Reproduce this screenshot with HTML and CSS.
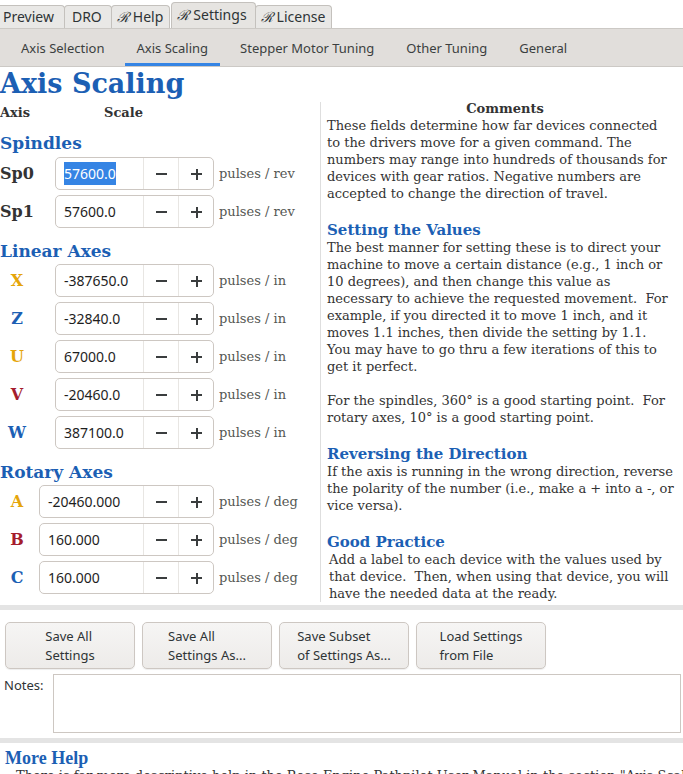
FILE: index.html
```html
<!DOCTYPE html>
<html lang="en">
<head>
    <meta charset="UTF-8">
    <meta name="viewport" content="width=device-width, initial-scale=1.0">
    <title>Rose Engine Settings</title>
    <link rel="stylesheet" href="styles.css">
</head>
<body>
    <nav class="notebook">
        <span class="tab first">Preview</span>
        <span class="tab">DRO</span>
        <span class="tab rosed"><i class="rose">ℛ</i>Help</span>
        <span class="tab rosed active"><i class="rose">ℛ</i>Settings</span>
        <span class="tab rosed"><i class="rose">ℛ</i>License</span>
    </nav>

    <nav class="subtabs">
        <span>Axis Selection</span>
        <span class="active">Axis Scaling</span>
        <span>Stepper Motor Tuning</span>
        <span>Other Tuning</span>
        <span>General</span>
    </nav>

    <main class="page">
        <section class="scales">
            <h1>Axis Scaling</h1>
            <div class="col-head"><span>Axis</span><span>Scale</span></div>

            <h2>Spindles</h2>
            <div class="row spindle">
                <label>Sp0</label>
                <div class="spin">
                    <div class="entry"><span class="sel">57600.0</span></div>
                    <span class="btn minus"></span><span class="btn plus"></span>
                </div>
                <span class="unit">pulses / rev</span>
            </div>
            <div class="row spindle">
                <label>Sp1</label>
                <div class="spin">
                    <div class="entry">57600.0</div>
                    <span class="btn minus"></span><span class="btn plus"></span>
                </div>
                <span class="unit">pulses / rev</span>
            </div>

            <h2>Linear Axes</h2>
            <div class="row linear">
                <label class="gold">X</label>
                <div class="spin">
                    <div class="entry">-387650.0</div>
                    <span class="btn minus"></span><span class="btn plus"></span>
                </div>
                <span class="unit">pulses / in</span>
            </div>
            <div class="row linear">
                <label class="blue">Z</label>
                <div class="spin">
                    <div class="entry">-32840.0</div>
                    <span class="btn minus"></span><span class="btn plus"></span>
                </div>
                <span class="unit">pulses / in</span>
            </div>
            <div class="row linear">
                <label class="gold">U</label>
                <div class="spin">
                    <div class="entry">67000.0</div>
                    <span class="btn minus"></span><span class="btn plus"></span>
                </div>
                <span class="unit">pulses / in</span>
            </div>
            <div class="row linear">
                <label class="red">V</label>
                <div class="spin">
                    <div class="entry">-20460.0</div>
                    <span class="btn minus"></span><span class="btn plus"></span>
                </div>
                <span class="unit">pulses / in</span>
            </div>
            <div class="row linear">
                <label class="blue">W</label>
                <div class="spin">
                    <div class="entry">387100.0</div>
                    <span class="btn minus"></span><span class="btn plus"></span>
                </div>
                <span class="unit">pulses / in</span>
            </div>

            <h2>Rotary Axes</h2>
            <div class="row rotary">
                <label class="gold">A</label>
                <div class="spin">
                    <div class="entry">-20460.000</div>
                    <span class="btn minus"></span><span class="btn plus"></span>
                </div>
                <span class="unit">pulses / deg</span>
            </div>
            <div class="row rotary">
                <label class="red">B</label>
                <div class="spin">
                    <div class="entry">160.000</div>
                    <span class="btn minus"></span><span class="btn plus"></span>
                </div>
                <span class="unit">pulses / deg</span>
            </div>
            <div class="row rotary">
                <label class="blue">C</label>
                <div class="spin">
                    <div class="entry">160.000</div>
                    <span class="btn minus"></span><span class="btn plus"></span>
                </div>
                <span class="unit">pulses / deg</span>
            </div>
        </section>

        <section class="comments">
            <h3>Comments</h3>
            <p>These fields determine how far devices connected
to the drivers move for a given command. The
numbers may range into hundreds of thousands for
devices with gear ratios. Negative numbers are
accepted to change the direction of travel.</p>
            <h4>Setting the Values</h4>
            <p>The best manner for setting these is to direct your
machine to move a certain distance (e.g., 1 inch or
10 degrees), and then change this value as
necessary to achieve the requested movement.  For
example, if you directed it to move 1 inch, and it
moves 1.1 inches, then divide the setting by 1.1.
You may have to go thru a few iterations of this to
get it perfect.

For the spindles, 360° is a good starting point.  For
rotary axes, 10° is a good starting point.</p>
            <h4>Reversing the Direction</h4>
            <p>If the axis is running in the wrong direction, reverse
the polarity of the number (i.e., make a + into a -, or
vice versa).</p>
            <h4>Good Practice</h4>
            <p class="nudge">Add a label to each device with the values used by
that device.  Then, when using that device, you will
have the needed data at the ready.</p>
        </section>
    </main>

    <div class="actions">
        <button><span>Save All<br>Settings</span></button>
        <button><span>Save All<br>Settings As...</span></button>
        <button><span>Save Subset<br>of Settings As...</span></button>
        <button><span>Load Settings<br>from File</span></button>
    </div>

    <div class="notes">
        <label for="notes">Notes:</label>
        <textarea id="notes"></textarea>
    </div>

    <section class="more-help">
        <h2>More Help</h2>
        <p>There is far more descriptive help in the Rose Engine Pathpilot User Manual in the section "Axis Scaling".</p>
    </section>
</body>
</html>
```

FILE: styles.css
```css
body {
    margin: 0;
    width: 683px;
    height: 774px;
    overflow: hidden;
    font-family: "Noto Sans", sans-serif;
    font-size: 13px;
    color: #2e3436;
    background: #fff;
}

/* top notebook tabs */
.notebook {
    display: flex;
    align-items: flex-end;
    height: 28px;
}

.tab {
    height: 22px;
    line-height: 22px;
    padding: 0 9px 0 7px;
    background: #e9e8e6;
    border: 1px solid #c4c1bd;
    border-bottom: none;
    border-radius: 4px 4px 0 0;
    margin-right: -1px;
    font-size: 14px;
    color: #2e3436;
}

.tab.first {
    padding-left: 3px;
    padding-right: 10px;
    border-left: none;
    border-radius: 0 4px 0 0;
}

.tab.rosed {
    padding: 0 6px 0 5px;
}

.tab.active {
    height: 25px;
    line-height: 24px;
    margin-left: 2px;
    padding-right: 8px;
    background: #e6e4e1;
}

.rose {
    font-family: "DejaVu Serif", serif;
    font-size: 14px;
    margin-right: 4px;
}

/* second row of tabs */
.subtabs {
    display: flex;
    gap: 8px;
    height: 37px;
    padding-left: 9px;
    background: #e1dedb;
    border-top: 1px solid #ccc9c5;
    border-bottom: 1px solid #ccc9c5;
}

.subtabs span {
    padding: 2px 12px 0;
    line-height: 35px;
    color: #3b3f40;
}

.subtabs span.active {
    box-shadow: inset 0 -3px 0 #3584e4;
}

/* main page: scale column + comments */
.page {
    display: flex;
    height: 538px;
    border-bottom: 5px solid #e4e4e4;
}

.scales {
    width: 320px;
    font-family: "DejaVu Serif", serif;
}

h1 {
    margin: 0;
    font-size: 27px;
    line-height: 33px;
    color: #1c5fb4;
}

.col-head {
    display: flex;
    margin-top: 4px;
    font-weight: bold;
    font-size: 13px;
    line-height: 17px;
    color: #333;
}

.col-head span:first-child {
    width: 104px;
}

.scales h2 {
    margin: 12px 0 4px;
    font-size: 17px;
    line-height: 20px;
    color: #1c5fb4;
}

.scales h2 ~ h2 {
    margin-top: 13px;
    margin-bottom: 3px;
}

.row {
    display: flex;
    align-items: center;
    margin-bottom: 5px;
}

.row label {
    width: 34px;
    text-align: center;
    font-weight: bold;
    font-size: 16px;
    color: #333;
}

.row.spindle label {
    text-align: left;
}

.gold { color: #e5a50a !important; }
.blue { color: #1c5fb4 !important; }
.red { color: #a51d2d !important; }

.spin {
    display: flex;
    height: 31px;
    width: 157px;
    margin-left: 21px;
    border: 1px solid #cdc7c2;
    border-radius: 5px;
    background: #fff;
    font-family: "Noto Sans", sans-serif;
    font-size: 14px;
    color: #1e1e1e;
}

.rotary .spin {
    width: 173px;
    margin-left: 5px;
}

.entry {
    flex: 1;
    padding-left: 8px;
    line-height: 31px;
}

.sel {
    background: #3584e4;
    color: #fff;
    padding: 2px 0;
}

.btn {
    position: relative;
    width: 34px;
    border-left: 1px solid #e8e6e3;
}

.btn::before,
.btn::after {
    content: "";
    position: absolute;
    left: 12px;
    top: 15px;
    width: 11px;
    height: 2px;
    background: #3a3d3e;
}

.btn.minus::after {
    display: none;
}

.btn.plus::after {
    left: 16.5px;
    top: 10.5px;
    width: 2px;
    height: 11px;
}

.unit {
    margin-left: 5px;
    font-size: 13px;
    color: #555753;
}

.comments {
    flex: 1;
    margin-top: 35px;
    height: 500px;
    padding-left: 6px;
    border-left: 1px solid #dedede;
    font-family: "DejaVu Serif", serif;
    font-size: 13px;
    line-height: 17px;
    color: #333;
}

.comments h3 {
    margin: -2px 0 0;
    text-align: center;
    font-size: 13px;
    line-height: 17px;
}

.comments p {
    margin: 0;
    white-space: pre;
}

.comments p.nudge {
    padding-left: 2px;
}

.comments h4 {
    margin: 20px 0 0;
    font-size: 15px;
    line-height: 17px;
    color: #1c5fb4;
}

/* settings buttons */
.actions {
    display: flex;
    gap: 7px;
    padding: 12px 0 0 5px;
}

.actions button {
    width: 130px;
    height: 47px;
    padding: 0;
    text-align: center;
    font-family: "Noto Sans", sans-serif;
    font-size: 13px;
    line-height: 19px;
    color: #2e3436;
    background: linear-gradient(#f6f5f4, #edebe9);
    border: 1px solid #cdc7c2;
    border-radius: 5px;
    box-shadow: 0 1px 1px rgba(0, 0, 0, 0.07);
}

.actions button span {
    display: inline-block;
    text-align: left;
}

.notes {
    display: flex;
    height: 64px;
    padding: 5px 2px 0 4px;
    border-bottom: 5px solid #e4e4e4;
}

.notes label {
    width: 49px;
    line-height: 20px;
    padding-top: 1px;
}

.notes textarea {
    flex: 1;
    height: 53px;
    margin: 0;
    border: 1px solid #cdc7c2;
    resize: none;
}

.more-help {
    padding: 5px 5px 0;
    font-family: "DejaVu Serif", serif;
}

.more-help h2 {
    margin: 0;
    font-family: "Liberation Serif", serif;
    font-size: 18px;
    line-height: 20px;
    color: #1c5fb4;
}

.more-help p {
    margin: 0;
    padding-left: 11px;
    font-size: 13px;
    line-height: 16px;
    white-space: nowrap;
    color: #333;
}
```
